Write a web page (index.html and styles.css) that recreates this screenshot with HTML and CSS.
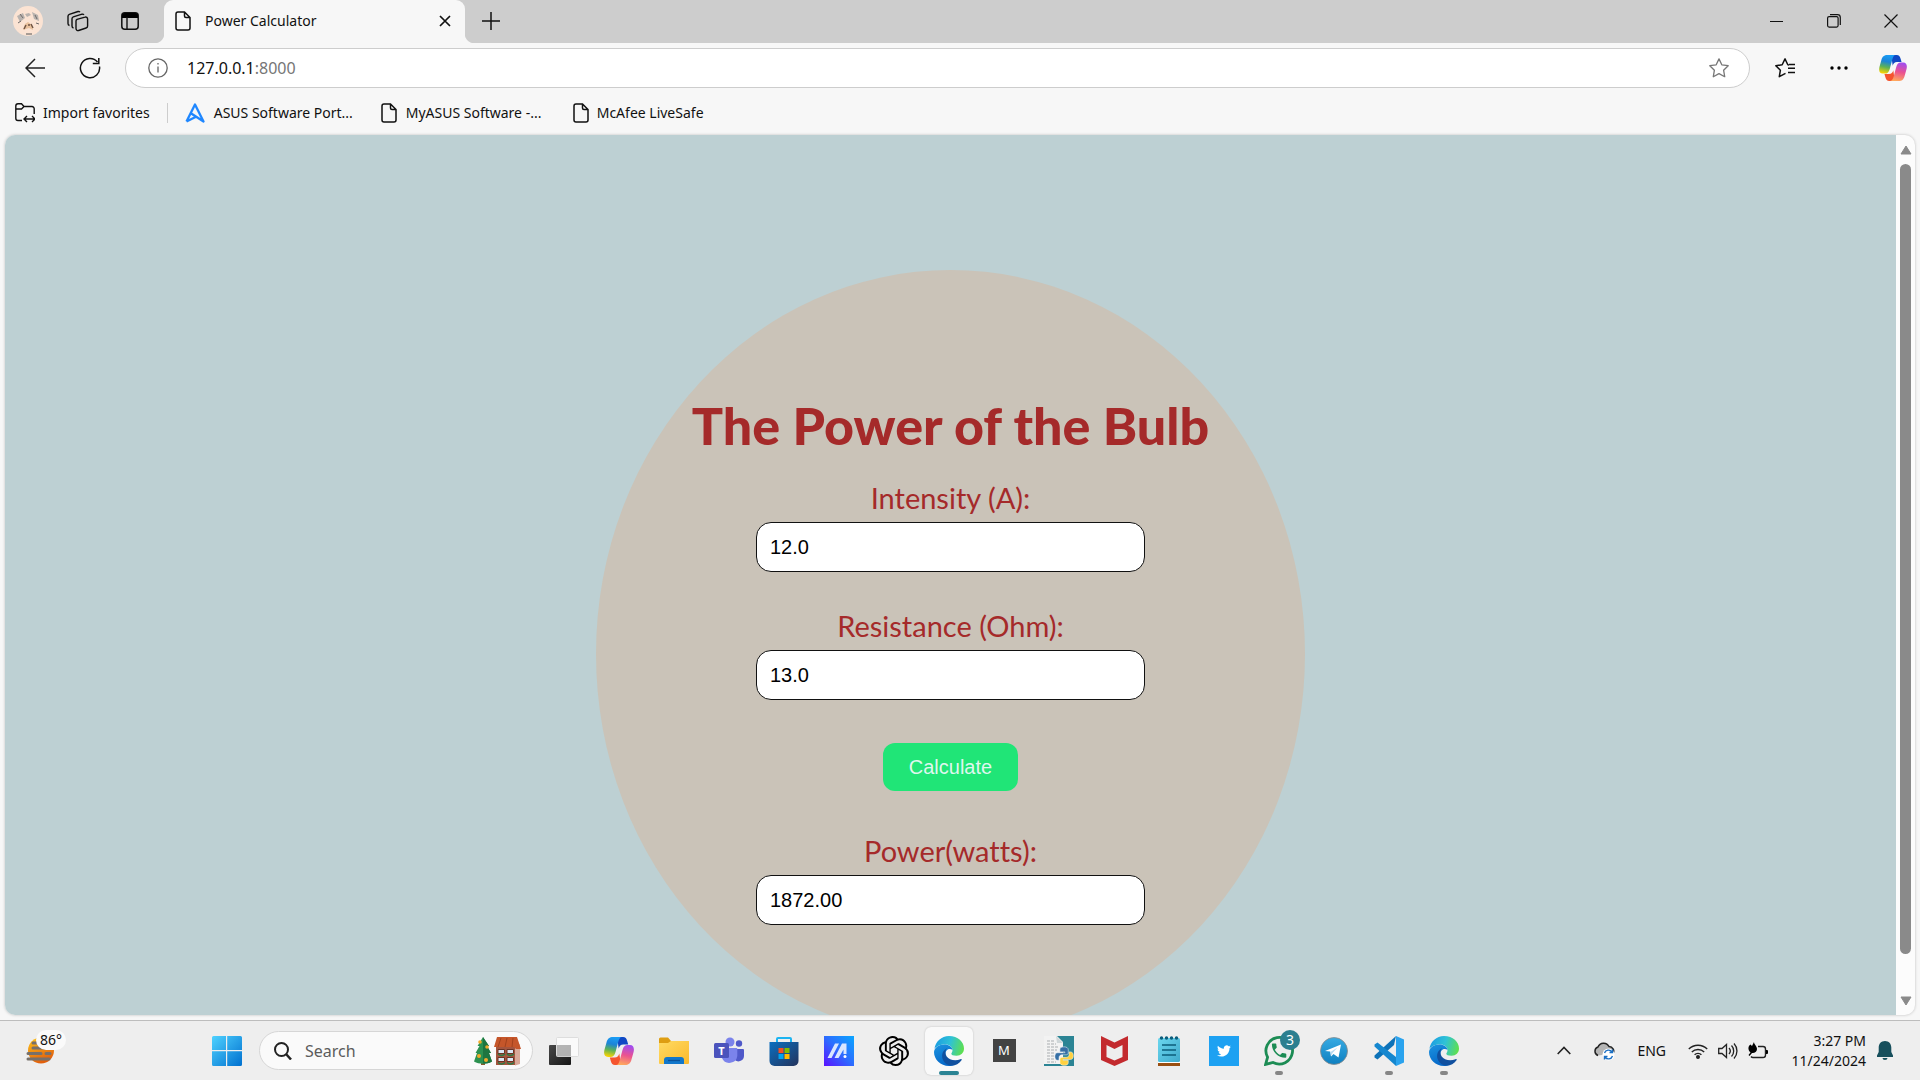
FILE: index.html
```html
<!DOCTYPE html>
<html lang="en">
<head>
<meta charset="utf-8">
<title>Power Calculator</title>
<link rel="stylesheet" href="styles.css">
</head>
<body>
<svg class="defs" aria-hidden="true">
  <defs>
    <linearGradient id="cpA" x1="0.5" y1="0" x2="0.3" y2="1"><stop offset="0" stop-color="#1a9df5"/><stop offset=".35" stop-color="#1b84d8"/><stop offset=".65" stop-color="#5db256"/><stop offset="1" stop-color="#ffd400"/></linearGradient>
    <linearGradient id="cpB" x1="0.6" y1="0" x2="0.4" y2="1"><stop offset="0" stop-color="#a04cf0"/><stop offset=".5" stop-color="#ea5291"/><stop offset="1" stop-color="#ffa95c"/></linearGradient>
    <linearGradient id="edA" x1="0" y1="0.4" x2="1" y2="0.6"><stop offset="0" stop-color="#1b9de2"/><stop offset=".5" stop-color="#2fc2d6"/><stop offset="1" stop-color="#5fe04c"/></linearGradient>
    <linearGradient id="edB" x1="0" y1="0" x2="0.4" y2="1"><stop offset="0" stop-color="#1c94e0"/><stop offset="1" stop-color="#0668c8"/></linearGradient>
    <linearGradient id="win" x1="0" y1="0" x2="1" y2="1"><stop offset="0" stop-color="#4fd2ff"/><stop offset="1" stop-color="#0070cf"/></linearGradient>
    <linearGradient id="folder" x1="0" y1="0" x2="1" y2="1"><stop offset="0" stop-color="#ffdb63"/><stop offset="1" stop-color="#fbb92c"/></linearGradient>
    <linearGradient id="store" x1="0" y1="0" x2="1" y2="1"><stop offset="0" stop-color="#0a6fc0"/><stop offset="1" stop-color="#24335c"/></linearGradient>
    <linearGradient id="asus" x1="0" y1="1" x2="1" y2="0"><stop offset="0" stop-color="#5a10ff"/><stop offset=".5" stop-color="#2c6cff"/><stop offset="1" stop-color="#0aa6ff"/></linearGradient>
    <linearGradient id="note" x1="0" y1="0" x2="1" y2="1"><stop offset="0" stop-color="#6bd7ef"/><stop offset="1" stop-color="#3fa9cb"/></linearGradient>
    <linearGradient id="tele" x1="0" y1="0" x2="0" y2="1"><stop offset="0" stop-color="#37abe3"/><stop offset="1" stop-color="#0f7fc0"/></linearGradient>
    <linearGradient id="dark" x1="0" y1="0" x2="1" y2="1"><stop offset="0" stop-color="#484848"/><stop offset="1" stop-color="#161616"/></linearGradient>
    <linearGradient id="sun" x1="0" y1="0" x2="0.4" y2="1"><stop offset="0" stop-color="#ffc61a"/><stop offset="1" stop-color="#e2600c"/></linearGradient>
  </defs>
  <symbol id="copilot" viewBox="0 0 30 28">
    <path d="M13 0h6c2.500 0 3.500 1.500 4.200 4l1 3.500h-5c-2.500 0-3.700 1.200-4.500 4z" fill="#1048c4"/>
    <path d="M17 28h-6c-2.500 0-3.500-1.500-4.200-4l-1-3.500h5c2.500 0 3.700-1.200 4.500-4z" fill="#f5542e"/>
    <path d="M9 0h9c-2 0-3 2-3.800 5l-2.700 10c-.9 3.500-2.500 5-5 5H4c-3.500 0-4.500-3-3.600-7L2.500 5.500C3.500 1.500 5.500 0 9 0z" fill="url(#cpA)"/>
    <path d="M21 28h-9c2 0 3-2 3.800-5l2.700-10c.9-3.500 2.500-5 5-5H26c3.500 0 4.500 3 3.600 7l-2.100 7.500c-1 4-3 5.500-6.500 5.500z" fill="url(#cpB)"/>
  </symbol>
  <symbol id="edge" viewBox="0 0 30 30">
    <path d="M.4 13C1.500 5.500 7.500 0 15 0c9 0 15 6 15 12.500 0 4.200-3 7.200-7.500 7.200-3.500 0-5.200-1-5.200-2 0-.7 1.200-1.300 1.200-3.700 0-3-3-5.500-7-5.500C6 8.500 2 10.500.4 13z" fill="url(#edA)"/>
    <path d="M0 16C.3 11.500 5 8.500 10.500 8.500c4.500 0 8 2.500 8 5.500-2-2-7-1.500-7 4 0 6 5 9 9.500 10.700C19.500 29.600 17 30 15 30 6.500 30 0 23.500 0 16z" fill="url(#edB)"/>
    <path d="M13 12.300c-2 2.200-2.300 5.300-.3 8.200 2.300 3.300 8.300 5 13.800 2.700.8-.3 1.600.2 1 1.100-2.500 3.800-6.500 5.500-10.500 5.200-9-.7-12.500-13-4-17.200z" fill="#10509f"/>
  </symbol>
  <symbol id="doc" viewBox="0 0 16 20">
    <path d="M3 1h6.500L15 6.500V17a2 2 0 0 1-2 2H3a2 2 0 0 1-2-2V3a2 2 0 0 1 2-2zM9.500 1v4a1.500 1.500 0 0 0 1.500 1.500h4" fill="none" stroke="#111" stroke-width="1.500"/>
  </symbol>
</svg>

<header class="browser">
  <div class="tabstrip">
    <button class="chrome-btn w56" aria-label="Profile">
      <svg width="30" height="30" viewBox="0 0 30 30"><circle cx="15" cy="15" r="15" fill="#fbe3d3"/><path d="M4 10l6-3 2 5-5 4zM19 6l6 3 1 6-5-2zM12 8l4-1 2 2-4 2z" fill="#b8b2ae"/><path d="M7 8l3 4M22 9l2 4M5 17l3-2M23 17l3 1" stroke="#6f6a69" stroke-width="1"/><path d="M10 24l2-6 3-2 4 3 1 5-4-2-3 1z" fill="#e9c19d"/><path d="M11 23l2-4M18 18l2 4M15 19h2" stroke="#705443" stroke-width="1.500"/><path d="M13 28h6" stroke="#555"/></svg>
    </button>
    <button class="chrome-btn w44" aria-label="Workspaces">
      <svg width="22" height="22" viewBox="0 0 22 22" fill="none" stroke="#111" stroke-width="1.400"><path d="M10 9.300l8-2.200a2 2 0 0 1 2.600 1.900v7a2 2 0 0 1-1.500 2l-7.500 2.500A2 2 0 0 1 9 18.600v-7.400a2 2 0 0 1 1-1.900zM6.500 18A2 2 0 0 1 5 16V8.700a2 2 0 0 1 1.300-1.800L15 4.200a2 2 0 0 1 2 .6M2.500 15.500A2 2 0 0 1 1 13.500V6.200A2 2 0 0 1 2.300 4.400L11 1.500a2 2 0 0 1 2 .6"/></svg>
    </button>
    <button class="chrome-btn w60" aria-label="Tab actions">
      <svg width="18" height="18" viewBox="0 0 18 18"><rect x=".8" y=".8" width="16.400" height="16.400" rx="3" fill="none" stroke="#111" stroke-width="1.500"/><path d="M1 6V3.500A2.500 2.500 0 0 1 3.500 1h11A2.500 2.500 0 0 1 17 3.500V6z"/><path d="M6 5v12" stroke="#111" stroke-width="1.400"/></svg>
    </button>
    <div class="tab">
      <svg width="16" height="20"><use href="#doc"/></svg>
      <span class="tab-title">Power Calculator</span>
      <button class="icon-btn" aria-label="Close tab"><svg width="12" height="12" viewBox="0 0 12 12"><path d="M1 1l10 10M11 1L1 11" stroke="#111" stroke-width="1.700"/></svg></button>
    </div>
    <button class="chrome-btn w52" aria-label="New tab"><svg width="18" height="18" viewBox="0 0 18 18"><path d="M9 0v18M0 9h18" stroke="#111" stroke-width="1.500"/></svg></button>
    <div class="window-controls">
      <button class="chrome-btn" aria-label="Minimize"><svg width="14" height="14" viewBox="0 0 14 14"><path d="M0 7.500h13" stroke="#111"/></svg></button>
      <button class="chrome-btn" aria-label="Restore"><svg width="14" height="14" viewBox="0 0 14 14" fill="none" stroke="#111" stroke-width="1.200"><rect x=".6" y="2.600" width="10.500" height="10.500" rx="1.500"/><path d="M3 .7h7.500a2.800 2.800 0 0 1 2.800 2.800V11"/></svg></button>
      <button class="chrome-btn" aria-label="Close"><svg width="14" height="14" viewBox="0 0 14 14"><path d="M.5 .5l13 13M13.500 .5l-13 13" stroke="#111" stroke-width="1.200"/></svg></button>
    </div>
  </div>

  <div class="toolbar">
    <button class="chrome-btn w55" aria-label="Back"><svg width="20" height="20" viewBox="0 0 20 20" fill="none" stroke="#222" stroke-width="1.500"><path d="M10 1L1 10l9 9M1 10h19"/></svg></button>
    <button class="chrome-btn w55" aria-label="Refresh"><svg width="22" height="22" viewBox="0 0 22 22" fill="none" stroke="#111" stroke-width="1.500"><path d="M20.500 9.500A9.600 9.600 0 1 1 18.500 5M19.800 1v5.500h-6"/></svg></button>
    <div class="address">
      <svg width="20" height="20" viewBox="0 0 20 20" fill="none" stroke="#666" stroke-width="1.300"><circle cx="10" cy="10" r="9.200"/><path d="M10 8.500v6M10 5v1.600"/></svg>
      <div class="url" role="textbox" aria-label="Address">127.0.0.1<span class="port">:8000</span></div>
      <button class="icon-btn" aria-label="Add to favorites"><svg width="20" height="20" viewBox="0 0 20 20" fill="none" stroke="#777" stroke-width="1.300" stroke-linejoin="round"><path d="M10 .9l2.800 5.900 6.400.9-4.600 4.500 1.100 6.500L10 15.600l-5.700 3.100 1.100-6.500L.8 7.700l6.400-.9z"/></svg></button>
    </div>
    <button class="chrome-btn w54" aria-label="Favorites"><svg width="20" height="20" viewBox="0 0 20 20" fill="none" stroke="#111" stroke-width="1.500" stroke-linejoin="round"><path d="M14 6.900l-1.200-.1L10 .9 7.200 6.800l-6.400.9 4.600 4.500-1.100 6.500L10.500 15.400M13 10.300h7M13 14.500h7M14 6.500h6"/></svg></button>
    <button class="chrome-btn w54" aria-label="More"><svg width="18" height="4" viewBox="0 0 18 4"><circle cx="2" cy="2" r="1.700"/><circle cx="9" cy="2" r="1.700"/><circle cx="16" cy="2" r="1.700"/></svg></button>
    <button class="chrome-btn w54" aria-label="Copilot"><svg width="28" height="26"><use href="#copilot"/></svg></button>
  </div>

  <nav class="favorites">
    <a href="#" class="fav"><svg width="20" height="20" viewBox="0 0 20 20" fill="none" stroke="#111" stroke-width="1.400"><path d="M7 17.500H3A2.200 2.200 0 0 1 .8 15.300V3A2.200 2.200 0 0 1 3 .8h3.500L9 3.500h8a2.200 2.200 0 0 1 2.200 2.200V11M1 6h5.500L9 3.500M9.500 16h10M12 13l-3 3 3 3M17 13l3 3-3 3"/></svg><span>Import favorites</span></a>
    <i class="divider"></i>
    <a href="#" class="fav long"><svg width="20" height="20" viewBox="0 0 20 20" fill="none" stroke="#1f87ff" stroke-width="2.300" stroke-linejoin="round"><path d="M1.500 18.500L10 1.500l8.500 17-13-8.500M1.500 18.500l9-4.500"/></svg><span>ASUS Software Port...</span></a>
    <a href="#" class="fav long"><svg width="16" height="20"><use href="#doc"/></svg><span>MyASUS Software -...</span></a>
    <a href="#" class="fav"><svg width="16" height="20"><use href="#doc"/></svg><span>McAfee LiveSafe</span></a>
  </nav>
</header>

<div class="viewport">
  <main class="page">
    <form class="bulb">
      <h1>The Power of the Bulb</h1>
      <label for="intensity">Intensity (A):</label>
      <input id="intensity" type="text" value="12.0">
      <label for="resistance">Resistance (Ohm):</label>
      <input id="resistance" type="text" value="13.0">
      <button class="calculate" type="button">Calculate</button>
      <label for="power">Power(watts):</label>
      <input id="power" type="text" value="1872.00">
    </form>
  </main>
  <div class="scrollbar" aria-hidden="true">
    <svg width="12" height="10" viewBox="0 0 12 10"><path d="M6 1l5 8H1z" fill="#8a8a8a" stroke="#8a8a8a" stroke-linejoin="round"/></svg>
    <div class="track"><div class="thumb"></div></div>
    <svg width="12" height="10" viewBox="0 0 12 10"><path d="M6 9l5-8H1z" fill="#8a8a8a" stroke="#8a8a8a" stroke-linejoin="round"/></svg>
  </div>
</div>

<footer class="taskbar">
  <button class="weather" aria-label="Weather">
    <svg width="28" height="26" viewBox="0 0 28 26"><circle cx="15" cy="12.500" r="13" fill="url(#sun)"/><g stroke="#77706a" stroke-width="3" stroke-linecap="round"><path d="M7 5h6M7 10h20M2 15.500h13M20 15.500h4M2 21h21"/></g></svg>
    <span class="temp">86°</span>
  </button>

  <div class="apps">
    <button class="app start" aria-label="Start"><svg width="30" height="30" viewBox="0 0 30 30" fill="url(#win)"><path d="M0 1.500A1.500 1.500 0 0 1 1.500 0H14v14H0zM15.200 0h13.300A1.500 1.500 0 0 1 30 1.500V14H15.200zM0 15.200h14V30H1.500A1.500 1.500 0 0 1 0 28.500zM15.200 15.200H30v13.300a1.500 1.500 0 0 1-1.500 1.500H15.200z"/></svg></button>
    <label class="search">
      <svg width="18" height="18" viewBox="0 0 18 18" fill="none" stroke="#222" stroke-width="2"><circle cx="7.500" cy="7.500" r="6.500"/><path d="M12 12l5 5.500" stroke-width="2.500"/></svg>
      <input type="text" placeholder="Search" aria-label="Search">
      <svg width="48" height="30" viewBox="0 0 48 30"><path d="M7 23h4v6H7z" fill="#8a5a2e"/><path d="M9 1l6 9h-2l4 7h-2l3 8.500c-5 3-13 3-18 0L3 17H1.500l4-7H3.500z" fill="#2c9150"/><path d="M9 1l6 9h-2l4 7h-2l3 8.500c-3 2-6 2-9 2z" fill="#1e7540"/><g fill="#f3a92a"><circle cx="6" cy="6" r="1.800"/><circle cx="13" cy="11" r="1.800"/><circle cx="5" cy="20" r="2"/><circle cx="12" cy="24" r="2"/></g><path d="M22 9h19v20H22z" fill="#a4553e"/><path d="M41 11l5-3v20l-5 1.500z" fill="#d9a999"/><path d="M23 1h20l4 12h-5l-2-2H20z" fill="#c5562a"/><path d="M27 2l-3 9M33 2l-2 9M39 2l-1 9" stroke="#a2421d"/><g fill="#dbe6f5" stroke="#6b3324"><path d="M24 13.500h6.500v4H24zM33 13.500h6.500v4H33zM24 21.500h6.500v4H24zM33 21.500h6.500v4H33z"/></g><path d="M24 18q3.500 3 7 0M33 18q3.500 3 7 0M24 26.500q3.500 3 7 0M33 26.500q3.500 3 7 0" stroke="#2a7a45" stroke-width="1.500" fill="none"/></svg>
    </label>
    <button class="app" aria-label="Task view"><svg width="30" height="28" viewBox="0 0 30 28"><path d="M0 9a1 1 0 0 1 1-1h21v19a1 1 0 0 1-1 1H1a1 1 0 0 1-1-1z" fill="url(#dark)"/><rect x="7.500" y=".5" width="22" height="19" rx="1" fill="#fff" fill-opacity=".7" stroke="#ddd"/><path d="M8 8h14v11.500H8z" fill="#aaa" fill-opacity=".6"/></svg></button>
    <button class="app" aria-label="Copilot"><svg width="30" height="28"><use href="#copilot"/></svg></button>
    <button class="app" aria-label="File Explorer"><svg width="30" height="28" viewBox="0 0 30 28"><path d="M0 2a1.500 1.500 0 0 1 1.500-1.500H9L12 4h17a1 1 0 0 1 1 1v4H0z" fill="#de9e12"/><path d="M0 6h9l3-2h18v22a1 1 0 0 1-1 1H1a1 1 0 0 1-1-1z" fill="url(#folder)"/><path d="M5 27v-4a3 3 0 0 1 3-3h14a3 3 0 0 1 3 3v4z" fill="#1277cb"/><path d="M9 23.500h12" stroke="#0a529a" stroke-width="1.300"/></svg></button>
    <button class="app" aria-label="Teams"><svg width="30" height="28" viewBox="0 0 30 28"><circle cx="16" cy="5" r="4.500" fill="#7b83eb"/><circle cx="25" cy="6.500" r="3.200" fill="#5059c9"/><path d="M20 12h9a1 1 0 0 1 1 1v6a5.500 5.500 0 0 1-10 3z" fill="#5059c9"/><path d="M9 11h13.500a.8.8 0 0 1 .8.800V19a8 8 0 0 1-15.300 2z" fill="#7b83eb"/><rect x="0" y="6" width="15" height="15" rx="1.500" fill="#4b53bc"/><text x="7.500" y="18" text-anchor="middle" class="teams-t">T</text></svg></button>
    <button class="app" aria-label="Store"><svg width="30" height="30" viewBox="0 0 30 30"><path d="M8 7V3a1 1 0 0 1 1-1h12a1 1 0 0 1 1 1v4" fill="none" stroke="#1cb4f1" stroke-width="2"/><path d="M0.500 6h29v19a5 5 0 0 1-5 5h-19a5 5 0 0 1-5-5z" fill="url(#store)"/><path d="M9.500 12h5v5h-5z" fill="#f25022"/><path d="M15.500 12h5v5h-5z" fill="#7fba00"/><path d="M9.500 18h5v5h-5z" fill="#00a4ef"/><path d="M15.500 18h5v5h-5z" fill="#ffb900"/></svg></button>
    <button class="app" aria-label="MyASUS"><svg width="30" height="30" viewBox="0 0 30 30"><path d="M0 0h30v30H0z" fill="url(#asus)"/><path d="M3.500 22L11 7.500h4L7.500 22zM10.500 22L18 7.500h4.500V18h-3v-4.500L14.500 22z" fill="#d9e6ff"/><circle cx="21" cy="20.500" r="1.500" fill="#fff"/></svg></button>
    <button class="app" aria-label="ChatGPT"><svg width="30" height="30" viewBox="0 0 24 24"><path d="M22.2819 9.8211a5.9847 5.9847 0 0 0-.5157-4.9108 6.0462 6.0462 0 0 0-6.5098-2.9A6.0651 6.0651 0 0 0 4.9807 4.1818a5.9847 5.9847 0 0 0-3.9977 2.9 6.0462 6.0462 0 0 0 .7427 7.0966 5.98 5.98 0 0 0 .511 4.9107 6.051 6.051 0 0 0 6.5146 2.9001A5.9847 5.9847 0 0 0 13.2599 24a6.0557 6.0557 0 0 0 5.7718-4.2058 5.9894 5.9894 0 0 0 3.9977-2.9001 6.0557 6.0557 0 0 0-.7475-7.0729zm-9.022 12.6081a4.4755 4.4755 0 0 1-2.8764-1.0408l.1419-.0804 4.7783-2.7582a.7948.7948 0 0 0 .3927-.6813v-6.7369l2.02 1.1686a.071.071 0 0 1 .038.052v5.5826a4.504 4.504 0 0 1-4.4945 4.4944zm-9.6607-4.1254a4.4708 4.4708 0 0 1-.5346-3.0137l.142.0852 4.783 2.7582a.7712.7712 0 0 0 .7806 0l5.8428-3.3685v2.3324a.0804.0804 0 0 1-.0332.0615L9.74 19.9502a4.4992 4.4992 0 0 1-6.1408-1.6464zM2.3408 7.8956a4.485 4.485 0 0 1 2.3655-1.9728V11.6a.7664.7664 0 0 0 .3879.6765l5.8144 3.3543-2.0201 1.1685a.0757.0757 0 0 1-.071 0l-4.8303-2.7865A4.504 4.504 0 0 1 2.3408 7.872zm16.5963 3.8558L13.1038 8.364 15.1192 7.2a.0757.0757 0 0 1 .071 0l4.8303 2.7913a4.4944 4.4944 0 0 1-.6765 8.1042v-5.6772a.79.79 0 0 0-.407-.667zm2.0107-3.0231l-.142-.0852-4.7735-2.7818a.7759.7759 0 0 0-.7854 0L9.409 9.2297V6.8974a.0662.0662 0 0 1 .0284-.0615l4.8303-2.7866a4.4992 4.4992 0 0 1 6.6802 4.66zM8.3065 12.863l-2.02-1.1638a.0804.0804 0 0 1-.038-.0567V6.0742a4.4992 4.4992 0 0 1 7.3757-3.4537l-.142.0805L8.704 5.459a.7948.7948 0 0 0-.3927.6813zm1.0976-2.3654l2.602-1.4998 2.6069 1.4998v2.9994l-2.5974 1.4997-2.6067-1.4997Z"/></svg></button>
    <button class="app active" aria-label="Microsoft Edge"><svg width="30" height="30"><use href="#edge"/></svg></button>
    <button class="app" aria-label="M"><span class="m-tile">M</span></button>
    <button class="app" aria-label="Python"><svg width="30" height="30" viewBox="0 0 30 30"><path d="M0 0h30v30H0z" fill="#2b8494"/><path d="M0 0h13l6 6v22H0z" fill="#f2f2f2"/><path d="M12 0l7 7h-6z" fill="#cfd6d8"/><g stroke="#a9adb0" stroke-dasharray="3 1"><path d="M3 5h8M3 8h9M3 11h12M3 14h10M3 17h8M3 20h8M3 23h8M3 26h9"/></g><g transform="translate(10 10) scale(.84)" stroke="#fff" stroke-width=".6"><path d="M12 1C8 1 7 2.500 7 4.500V7h6v1H4.500C2 8 1 10 1 12.500S2.200 17 4 17h2v-3c0-2 1.500-3.500 3.500-3.500h5C16 10.500 17 9.500 17 8V4.500C17 2.300 15 1 12 1z" fill="#366fa5"/><path d="M12 23c4 0 5-1.500 5-3.500V17h-6v-1h8.500c2.500 0 3.500-2 3.500-4.500S21.800 7 20 7h-2v3c0 2-1.500 3.500-3.500 3.500h-5C8 13.500 7 14.500 7 16v3.500C7 21.700 9 23 12 23z" fill="#ffd140"/></g></svg></button>
    <button class="app" aria-label="McAfee"><svg width="27" height="30" viewBox="0 0 27 30"><path d="M0 0l13.500 6.500L27 0v24l-13.500 6L0 24zM5.500 9v12l8 3.500 8-3.500V9l-8 4z" fill="#c32a2e" fill-rule="evenodd"/></svg></button>
    <button class="app" aria-label="Notepad"><svg width="22" height="30" viewBox="0 0 22 30"><path d="M0 27h22v3H0z" fill="#9a4f12"/><path d="M0 25h22v2H0z" fill="#fff"/><rect y="2" width="22" height="24" rx="1.500" fill="url(#note)"/><path d="M4 9h14M4 14h14M4 19h14" stroke="#0c5d7b" stroke-width="1.600"/><g fill="#0c5d7b"><circle cx="3.500" cy="2" r="1.700"/><circle cx="8.500" cy="2" r="1.700"/><circle cx="13.500" cy="2" r="1.700"/><circle cx="18.500" cy="2" r="1.700"/></g></svg></button>
    <button class="app" aria-label="Twitter"><svg width="30" height="30" viewBox="0 0 30 30"><path d="M0 0h30v30H0z" fill="#1da1f2"/><path transform="translate(8 8) scale(.58)" fill="#fff" d="M23.953 4.57a10 10 0 01-2.825.775 4.958 4.958 0 002.163-2.723c-.951.555-2.005.959-3.127 1.184a4.920 4.920 0 00-8.384 4.482C7.690 8.095 4.067 6.130 1.640 3.162a4.822 4.822 0 00-.666 2.475c0 1.710.870 3.213 2.188 4.096a4.904 4.904 0 01-2.228-.616v.060a4.923 4.923 0 003.946 4.827 4.996 4.996 0 01-2.212.085 4.936 4.936 0 004.604 3.417 9.867 9.867 0 01-6.102 2.105c-.390 0-.779-.023-1.170-.067a13.995 13.995 0 007.557 2.209c9.053 0 13.998-7.496 13.998-13.985 0-.210 0-.420-.015-.630A9.935 9.935 0 0024 4.590z"/></svg></button>
    <button class="app running" aria-label="WhatsApp"><svg width="30" height="30" viewBox="0 0 30 30"><path d="M1.600 28.400l2-7.200A13.300 13.300 0 1 1 9 26.500z" fill="none" stroke="#1c8c54" stroke-width="2.800"/><path transform="translate(5.500 5) scale(.8)" d="M6.620 10.790c1.440 2.830 3.760 5.140 6.590 6.590l2.200-2.200c.27-.27.67-.36 1.020-.24 1.120.37 2.330.57 3.570.57.55 0 1 .45 1 1V20c0 .55-.45 1-1 1-9.390 0-17-7.610-17-17 0-.55.45-1 1-1h3.500c.55 0 1 .45 1 1 0 1.250.2 2.450.57 3.570.11.35.03.74-.25 1.020z" fill="#1c8c54"/></svg><span class="badge">3</span></button>
    <button class="app" aria-label="Telegram"><svg width="28" height="28" viewBox="0 0 28 28"><circle cx="14" cy="14" r="13.500" fill="url(#tele)" stroke="#8a8a8a" stroke-width=".8"/><path d="M5 14L21 7.500 18.500 20.500l-5-3.500-2.500 2.500-.8-5z" fill="#fff"/><path d="M10.500 15l7-4.500-5 5.500-1.500 3z" fill="#b9daf0"/></svg></button>
    <button class="app running" aria-label="Visual Studio Code"><svg width="30" height="30" viewBox="0 0 30 30"><path d="M22 0l-2 9L3.500 23.500.5 21.500v-2z" fill="#0d72b8"/><path d="M.5 10.500v-2l3-2L22 21v9z" fill="#1587cf"/><path d="M22 0l8 3.500v23L22 30z" fill="#2aa3ee"/></svg></button>
    <button class="app running" aria-label="Microsoft Edge"><svg width="30" height="30"><use href="#edge"/></svg></button>
  </div>

  <div class="tray">
    <button class="icon-btn" aria-label="Hidden icons"><svg width="14" height="9" viewBox="0 0 14 9"><path d="M.7 8L7 1.500 13.300 8" fill="none" stroke="#222" stroke-width="1.600"/></svg></button>
    <svg class="cloud" width="22" height="20" viewBox="0 0 22 20"><path d="M5 14.500a4.500 4.500 0 0 1 0-8.500A6 6 0 0 1 16 5.500a4.600 4.600 0 0 1 4 7" fill="#b5b5b5" stroke="#222" stroke-width="1.500"/><circle cx="15.500" cy="13.500" r="6" fill="#fff"/><path d="M11.500 12a4.200 4.200 0 0 1 7.500-1M19.500 15a4.200 4.200 0 0 1-7.500 1M19.500 8.500V11.500h-3M11.500 18.500v-3h3" fill="none" stroke="#1a6fc4" stroke-width="1.400"/></svg>
    <button class="icon-btn lang">ENG</button>
    <button class="icon-btn status" aria-label="Network, volume and battery">
      <svg width="20" height="16" viewBox="0 0 20 16" fill="none" stroke="#222" stroke-width="1.400"><path d="M.8 6a13 13 0 0 1 18.400 0M3.800 9a8.800 8.800 0 0 1 12.400 0M6.600 11.800a4.800 4.800 0 0 1 6.800 0"/><circle cx="10" cy="14" r="1.300" fill="#222"/></svg>
      <svg width="20" height="18" viewBox="0 0 20 18" fill="none" stroke="#222" stroke-width="1.300"><path d="M.7 6.500h3.300L8.500 2.500v13L4 11.500H.7zM11 6a4.500 4.500 0 0 1 0 6M13.500 3.500a8 8 0 0 1 0 11M16 1.500a11 11 0 0 1 0 15"/></svg>
      <svg width="20" height="18" viewBox="0 0 20 18"><path d="M10 4.500h5A2.500 2.500 0 0 1 17.500 7v6a2.500 2.500 0 0 1-2.500 2.500H5a2.500 2.500 0 0 1-2-1" fill="none" stroke="#222" stroke-width="1.400"/><path d="M18 8h1a1 1 0 0 1 1 1v2a1 1 0 0 1-1 1h-1z"/><path d="M6 0c0 2.500 3 4 3 7S6 11.500 4 11L1.500 14 .5 13l2-2.500C-.5 8 0 4 2.500 2.500L4 4z"/></svg>
    </button>
    <div class="clock"><time>3:27 PM</time><time>11/24/2024</time></div>
    <button class="icon-btn" aria-label="Notifications"><svg width="16" height="19" viewBox="0 0 16 19" fill="#174f5c"><path d="M8 0c3.800 0 6.300 2.800 6.300 6.500v4.500L16 14.500V16H0v-1.500L1.700 11V6.500C1.700 2.800 4.200 0 8 0zM5.500 17h5a2.500 2 0 0 1-5 0z"/></svg></button>
  </div>
</footer>
</body>
</html>
```
FILE: styles.css
```css
* { box-sizing: border-box; }

body {
  margin: 0;
  height: 100vh;
  display: flex;
  flex-direction: column;
  overflow: hidden;
  background: #f7f7f7;
  color: #111;
  font: 14px/20px "Segoe UI", "Noto Sans", "Open Sans", sans-serif;
}

svg { display: block; flex: none; }
.defs { position: absolute; width: 0; height: 0; }

button {
  border: 0;
  padding: 0;
  background: none;
  font: inherit;
  color: inherit;
}

.chrome-btn,
.icon-btn {
  display: flex;
  align-items: center;
  justify-content: center;
  flex: none;
}
.w44 { width: 44px; }
.w52 { width: 52px; }
.w54 { width: 54px; }
.w55 { width: 55px; }
.w56 { width: 56px; }
.w60 { width: 60px; }

/* Browser frame */
.tabstrip {
  display: flex;
  height: 43px;
  background: #cdcdcd;
}
.tabstrip .chrome-btn { padding-bottom: 1px; }
.tab {
  position: relative;
  display: flex;
  align-items: center;
  gap: 14px;
  width: 301px;
  margin-left: 4px;
  padding: 0 14px 1px 11px;
  border-radius: 9px 9px 0 0;
  background: #f7f7f7;
}
.tab::before,
.tab::after {
  content: "";
  position: absolute;
  bottom: 0;
  width: 10px;
  height: 10px;
}
.tab::before { right: 100%; background: radial-gradient(circle at 0 0, #cdcdcd 10px, #f7f7f7 11px); }
.tab::after { left: 100%; background: radial-gradient(circle at 100% 0, #cdcdcd 10px, #f7f7f7 11px); }
.tab-title { flex: 1; }
.window-controls { display: flex; margin-left: auto; padding-right: 1px; }
.window-controls .chrome-btn { width: 57px; }

.toolbar {
  display: flex;
  height: 50px;
  padding: 5px 0 5px 7px;
}
.address {
  display: flex;
  align-items: center;
  gap: 19px;
  flex: 1;
  margin: 0 8px;
  padding: 0 20px 0 22px;
  border: 1px solid #cdcdcd;
  border-radius: 20px;
  background: #fff;
}
.url { flex: 1; font-size: 16px; }
.port { color: #767676; }

.favorites {
  display: flex;
  align-items: center;
  gap: 27px;
  height: 42px;
  padding: 0 15px 3px;
}
.fav {
  display: flex;
  align-items: center;
  gap: 8px;
  color: inherit;
  text-decoration: none;
  white-space: nowrap;
}
.fav.long { gap: 9px; }
.fav.long span { width: 140px; }
.divider { width: 1px; height: 20px; margin: 0 -10px; background: #cdcdcd; }

/* Page */
.viewport {
  display: flex;
  flex: 1;
  min-height: 0;
  margin: 0 5px 5px;
  border-radius: 10px;
  overflow: hidden;
  background: #fcfcfc;
  box-shadow: 0 0 3px #bbb;
}
.page {
  flex: 1;
  overflow: hidden;
  background: #bdd0d3;
}
.bulb {
  display: flex;
  flex-direction: column;
  align-items: center;
  width: 709px;
  height: 768px;
  margin: 135px auto 0;
  padding-top: 125px;
  border-radius: 50%;
  background: #cac3b8;
  color: #a52a2a;
  font-family: "Gill Sans", "Gill Sans MT", Lato, sans-serif;
  font-variant-ligatures: none;
}
.bulb h1 {
  margin: 0 0 17px;
  font-size: 52px;
  line-height: 60px;
  font-weight: 900;
}
.bulb label { padding-top: 2px; font-size: 29px; line-height: 48px; }
.bulb input {
  width: 389px;
  height: 50px;
  margin-bottom: 28px;
  padding: 0 13px;
  border: 1px solid #111;
  border-radius: 15px;
  background: #fff;
  color: #000;
  font: 20px/24px Arial, "Liberation Sans", sans-serif;
}
.calculate {
  width: 135px;
  height: 48px;
  margin: 15px 0 34px;
  border-radius: 12px;
  background: #20e577;
  color: #dff7ee;
  font: 20px/24px Arial, "Liberation Sans", sans-serif;
}
.scrollbar {
  display: flex;
  flex-direction: column;
  align-items: center;
  gap: 9px;
  width: 19px;
  padding: 10px 0 9px;
}
.track { flex: 1; }
.thumb { width: 11px; height: 96%; border-radius: 6px; background: #8a8a8a; }

/* Taskbar */
.taskbar {
  display: flex;
  align-items: center;
  height: 60px;
  padding: 0 27px 0 26px;
  border-top: 1px solid #bdbdbd;
  background: #eee;
}
.weather { position: relative; width: 172px; }
.temp {
  position: absolute;
  left: 10px;
  top: -8px;
  padding: 0 4px;
  border-radius: 10px;
  background: #fafafa;
}
.apps { display: flex; align-items: center; }
.app {
  position: relative;
  display: flex;
  align-items: center;
  justify-content: center;
  width: 48px;
  height: 48px;
  margin-right: 7px;
  border-radius: 6px;
}
.app.start { width: 58px; margin-right: 3px; }
.app.active { background: #f9f9f9; box-shadow: 0 0 2px #bbb; }
.app.active::after,
.app.running::after {
  content: "";
  position: absolute;
  left: 20px;
  bottom: 0;
  width: 8px;
  height: 4px;
  border-radius: 2px;
  background: #868686;
}
.app.active::after { left: 14px; width: 20px; background: #2b8494; }
.search {
  display: flex;
  align-items: center;
  gap: 13px;
  width: 274px;
  height: 39px;
  margin-right: 7px;
  padding: 0 10px 0 14px;
  border: 1px solid #d6d6d6;
  border-radius: 20px;
  background: #fafafa;
}
.search input {
  flex: 1;
  min-width: 0;
  padding: 0;
  border: 0;
  background: none;
  font: 16px/24px "Segoe UI", "Noto Sans", sans-serif;
}
.search input::placeholder { color: #5c5c5c; opacity: 1; }
.teams-t { fill: #fff; font: 700 11px "Noto Sans", sans-serif; }
.m-tile {
  width: 23px;
  height: 23px;
  background: #434343;
  color: #fff;
  font-size: 13px;
  line-height: 23px;
}
.badge {
  position: absolute;
  right: 3px;
  top: 3px;
  width: 20px;
  height: 20px;
  border-radius: 50%;
  background: #2b7f90;
  color: #fff;
}
.tray {
  display: flex;
  align-items: center;
  gap: 22px;
  margin-left: auto;
}
.status { gap: 10px; }
.clock {
  display: flex;
  flex-direction: column;
  width: 76px;
  margin-right: -11px;
  align-items: flex-end;
  white-space: nowrap;
}
```
